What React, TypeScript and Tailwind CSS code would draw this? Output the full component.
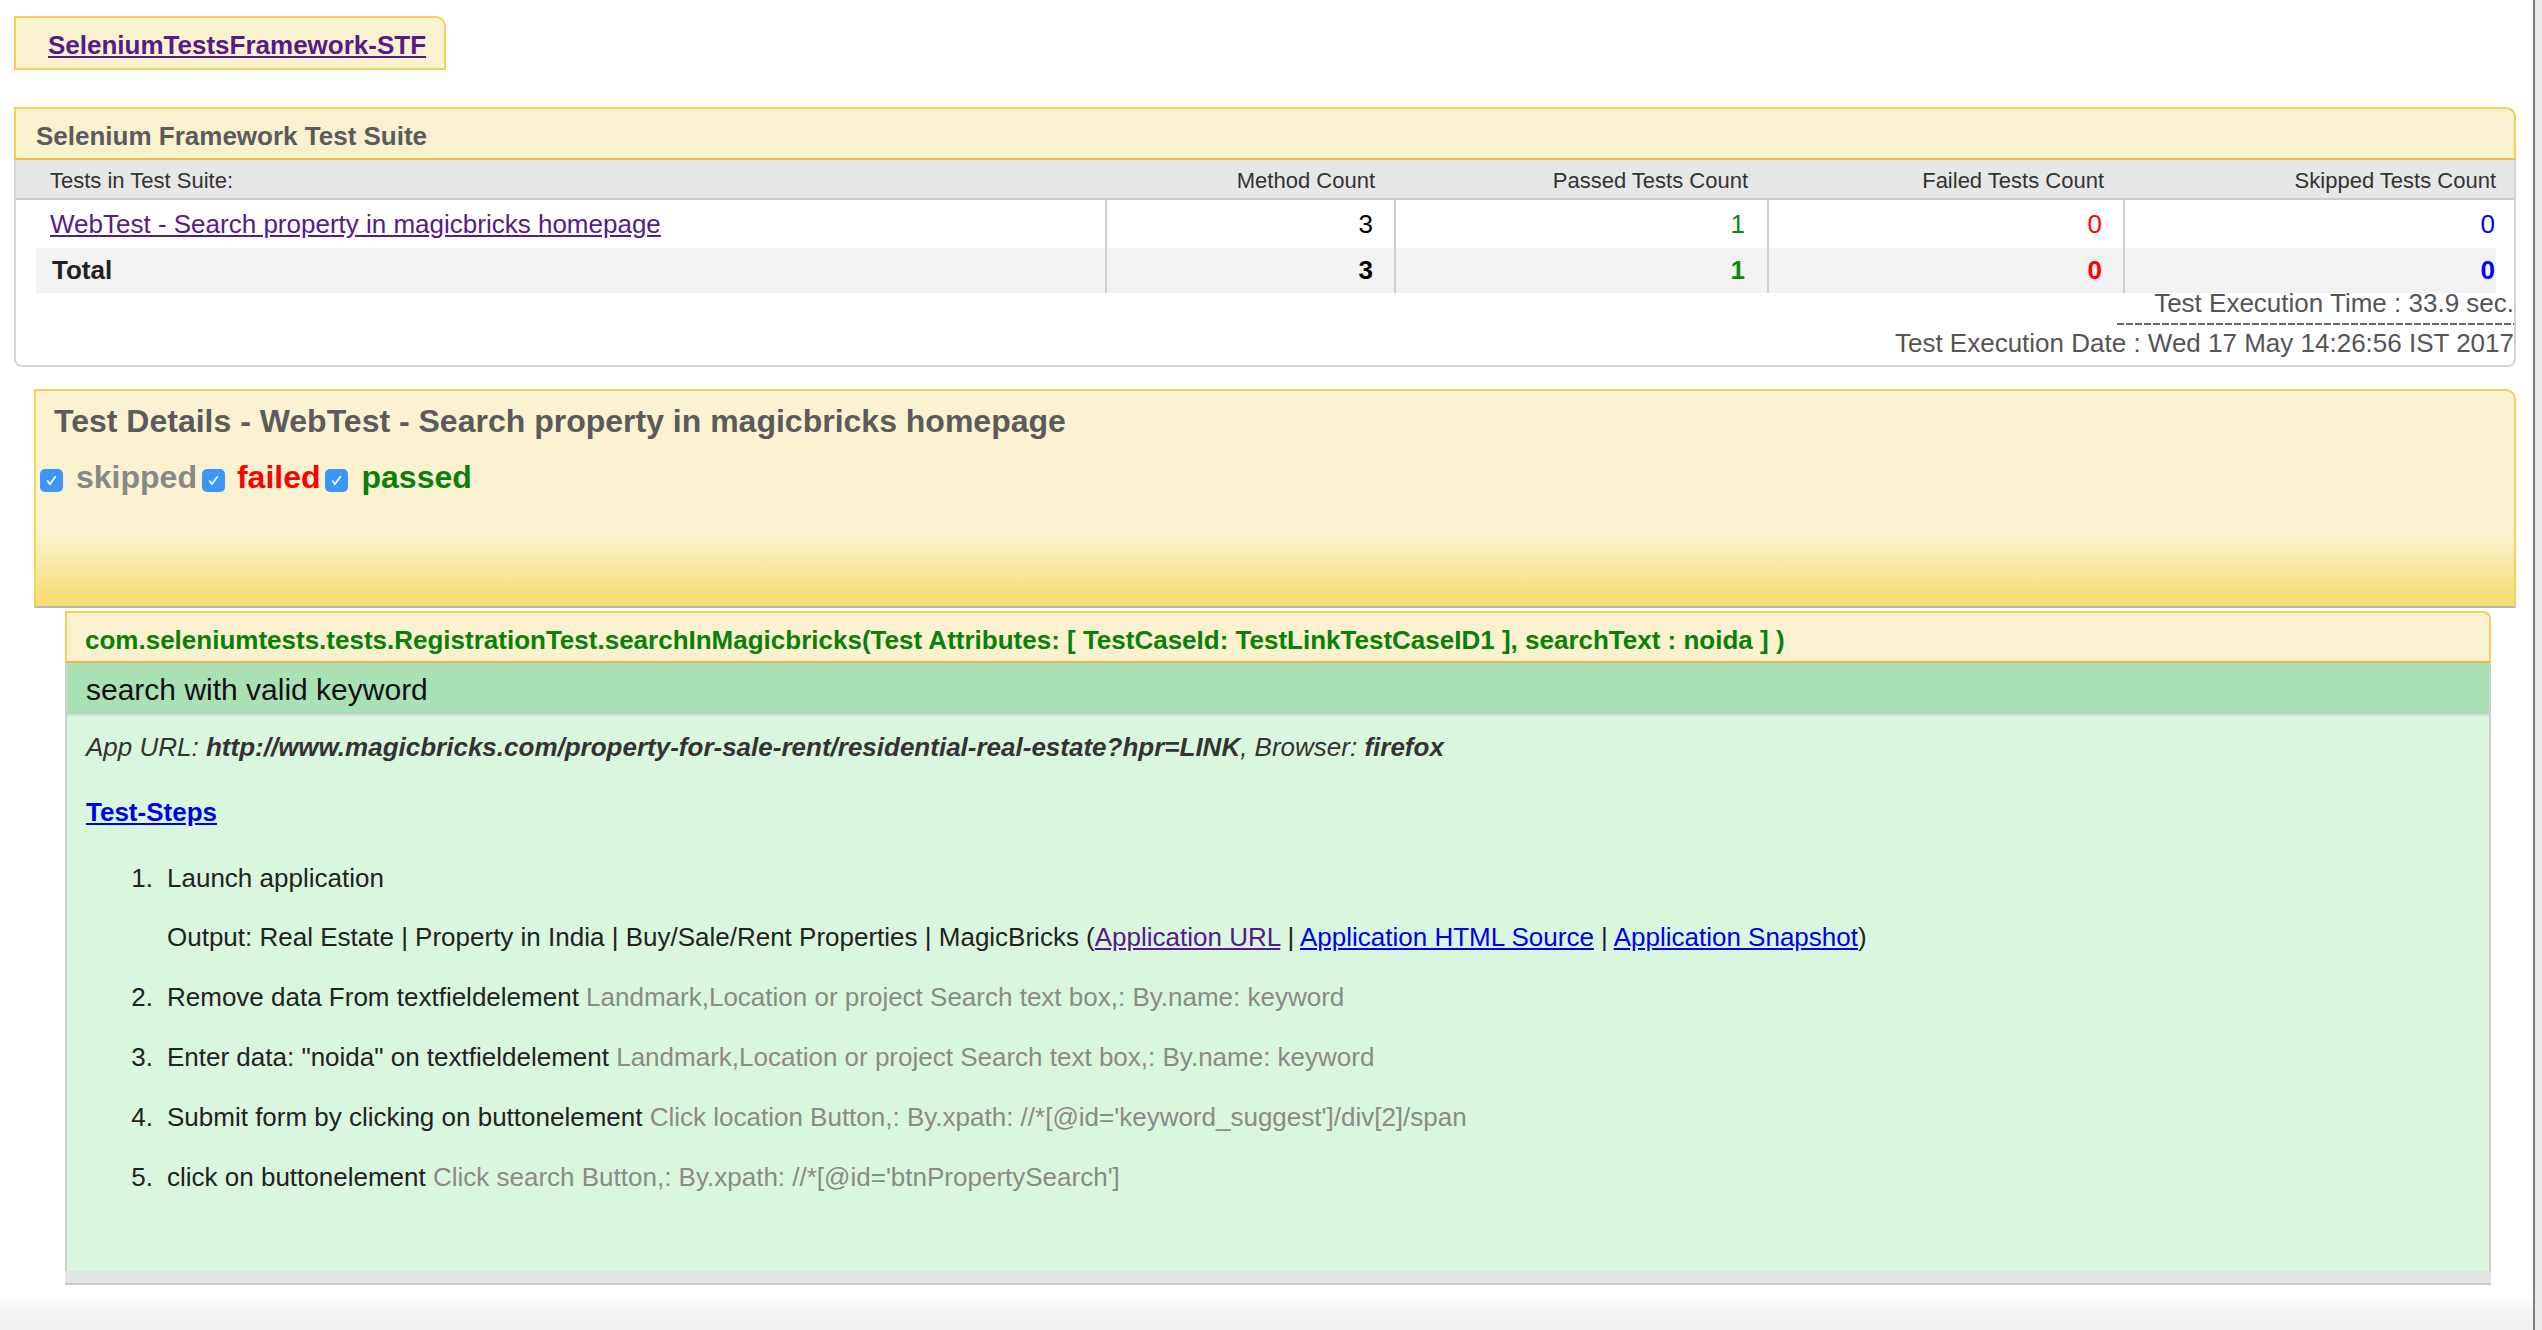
const cols = "grid grid-cols-[1069px_289px_373px_356px_373px]";

const rows = [
  { name: "WebTest - Search property in magicbricks homepage", method: 3, passed: 1, failed: 0, skipped: 0, total: false },
  { name: "Total", method: 3, passed: 1, failed: 0, skipped: 0, total: true },
];

const steps = [
  { text: "Remove data From textfieldelement", muted: "Landmark,Location or project Search text box,: By.name: keyword" },
  { text: 'Enter data: "noida" on textfieldelement', muted: "Landmark,Location or project Search text box,: By.name: keyword" },
  { text: "Submit form by clicking on buttonelement", muted: "Click location Button,: By.xpath: //*[@id='keyword_suggest']/div[2]/span" },
  { text: "click on buttonelement", muted: "Click search Button,: By.xpath: //*[@id='btnPropertySearch']" },
];

function Check() {
  return (
    <span className="mt-[10px] flex h-[23px] w-[23px] shrink-0 items-center justify-center rounded-[5px] bg-[#3d95f7]">
      <svg width="13" height="13" viewBox="0 0 24 24" fill="none" stroke="white" strokeWidth={3} strokeLinecap="round" strokeLinejoin="round">
        <path d="M5 13l4 6L19 5" />
      </svg>
    </span>
  );
}

export default function App() {
  return (
    <div className="flex h-[1330px] w-[2542px] overflow-hidden bg-white font-['Liberation_Sans',Arial,sans-serif]">
      <div className="flex flex-1 flex-col pl-[14px] pr-[17px] pt-[16px]">
        {/* Brand */}
        <div className="flex h-[54px] w-[432px] items-center rounded-tr-[10px] border-2 border-[#f5cf57] bg-[#faf2cf] pl-[32px] pt-[5px]">
          <a className="text-[26px] font-bold text-[#551a8b] underline">SeleniumTestsFramework-STF</a>
        </div>

        {/* Suite summary */}
        <div className="mt-[37px] rounded-b-[8px] rounded-tr-[10px] border-x-2 border-b-2 border-[#d3d3d3]">
          <div className="-mx-[2px] flex h-[53px] items-center rounded-tr-[10px] border-2 border-[#f5cf57] border-b-[#e6bf4c] bg-[#faf2cf] pl-[20px] pt-[5px]">
            <span className="text-[26px] font-bold text-[#5b5b5b]">Selenium Framework Test Suite</span>
          </div>
          <div className="h-[40px] border-b-2 border-[#cccccc] bg-[#e7e7e7] pl-[20px] pt-[2px] text-[22px] text-[#333]">
            <div className={`${cols} h-full items-center`}>
              <span className="pl-[14px]">Tests in Test Suite:</span>
              <span className="pr-[19px] text-right">Method Count</span>
              <span className="pr-[19px] text-right">Passed Tests Count</span>
              <span className="pr-[19px] text-right">Failed Tests Count</span>
              <span className="text-right">Skipped Tests Count</span>
            </div>
          </div>
          <div className="ml-[20px] text-[26px]">
            {rows.map((r) => (
              <div
                key={r.name}
                className={`${cols} ${r.total ? "h-[45px] w-[2460px] bg-[#f2f2f2] font-bold" : "h-[48px] bg-white"}`}
              >
                <div className={`flex items-center ${r.total ? "pl-[16px] text-[#222]" : "pl-[14px]"}`}>
                  {r.total ? r.name : <a className="text-[#551a8b] underline">{r.name}</a>}
                </div>
                <div className="flex items-center justify-end border-l-2 border-[#d0d0d0] pr-[21px] text-black">{r.method}</div>
                <div className="flex items-center justify-end border-l-2 border-[#d0d0d0] pr-[22px] text-[#0a8a0a]">{r.passed}</div>
                <div className="flex items-center justify-end border-l-2 border-[#d0d0d0] pr-[21px] text-[#ff0000]">{r.failed}</div>
                <div className="flex items-center justify-end border-l-2 border-[#d0d0d0] pr-[1px] text-[#0000ff]">{r.skipped}</div>
              </div>
            ))}
          </div>
          <div className="flex flex-col items-end pb-[9px] text-[26px] text-[#555]">
            <div className="leading-[20px]">Test Execution Time : 33.9 sec.</div>
            <div className="mt-[10px] h-[2px] w-[397px] bg-[repeating-linear-gradient(90deg,#666_0_7px,transparent_7px_9px)]" />
            <div className="mt-[5px] leading-[26px]">Test Execution Date : Wed 17 May 14:26:56 IST 2017</div>
          </div>
        </div>

        {/* Test details */}
        <div className="ml-[20px] mt-[22px] h-[219px] rounded-tr-[10px] border-2 border-[#f5cf57] border-b-[#b8b8b8] bg-[linear-gradient(to_bottom,#faf2d0_0%,#faf2d0_66%,#f7dc6f_100%)] pl-[2px]">
          <div className="mt-[12px] pl-[16px] text-[32px] font-bold leading-[36px] text-[#5b5b5b]">
            Test Details - WebTest - Search property in magicbricks homepage
          </div>
          <div className="mt-[20px] flex items-start text-[32px] font-bold leading-[36px]">
            <span className="ml-[2px]"><Check /></span>
            <span className="ml-[13px] text-[#888]">skipped</span>
            <span className="ml-[5px]"><Check /></span>
            <span className="ml-[12px] text-[#ff0000]">failed</span>
            <span className="ml-[4px]"><Check /></span>
            <span className="ml-[14px] text-[#0a800a]">passed</span>
          </div>
        </div>

        {/* Test method */}
        <div className="ml-[51px] mr-[25px] mt-[3px] rounded-tr-[8px] border-x-2 border-[#cfcfcf]">
          <div className="-mx-[2px] flex h-[52px] items-center rounded-tr-[8px] border-2 border-[#f5cf57] border-b-[#e6b94a] bg-[#faf2cf] pl-[18px] pt-[6px]">
            <span className="text-[26px] font-bold text-[#0a7f0a]">
              com.seleniumtests.tests.RegistrationTest.searchInMagicbricks(Test Attributes: [ TestCaseId: TestLinkTestCaseID1 ], searchText : noida ] )
            </span>
          </div>
          <div className="flex h-[53px] items-center border-b-2 border-[#dcdcdc] bg-[#a9e1b5] pl-[19px] pt-[2px] text-[30px] text-[#111]">
            search with valid keyword
          </div>
          <div className="h-[555px] bg-[#d9f7de] pl-[19px] pt-[16px] text-[26px] leading-[30px] text-[#222]">
            <div className="italic text-[#333]">
              App URL: <b>http://www.magicbricks.com/property-for-sale-rent/residential-real-estate?hpr=LINK</b>, Browser: <b>firefox</b>
            </div>
            <div className="mt-[35px]">
              <a className="font-bold text-[#0000ee] underline">Test-Steps</a>
            </div>
            <ol className="mt-[36px]">
              <li className="flex">
                <span className="w-[67px] shrink-0 text-right">1.</span>
                <div className="ml-[14px]">
                  <div>Launch application</div>
                  <div className="mt-[29px]">
                    Output: Real Estate | Property in India | Buy/Sale/Rent Properties | MagicBricks (
                    <a className="text-[#551a8b] underline">Application URL</a> |{" "}
                    <a className="text-[#0000ee] underline">Application HTML Source</a> |{" "}
                    <a className="text-[#0000ee] underline">Application Snapshot</a>)
                  </div>
                </div>
              </li>
              {steps.map((s, i) => (
                <li key={i} className="mt-[30px] flex">
                  <span className="w-[67px] shrink-0 text-right">{i + 2}.</span>
                  <div className="ml-[14px]">
                    {s.text} <span className="text-[#8c8a86]">{s.muted}</span>
                  </div>
                </li>
              ))}
            </ol>
          </div>
          <div className="-mx-[2px] h-[14px] border-b-2 border-[#c9c9c9] bg-[#e4e4e4]" />
        </div>

        <div className="-ml-[14px] -mr-[17px] flex-1 bg-[linear-gradient(to_bottom,#ffffff,#ffffff_20%,#f4f4f4_60%,#f0f0f0)]" />
      </div>

      {/* window behind */}
      <div className="w-[9px] shrink-0 border-l-2 border-[#7d7d7d] bg-[#ebebeb]" />
    </div>
  );
}
